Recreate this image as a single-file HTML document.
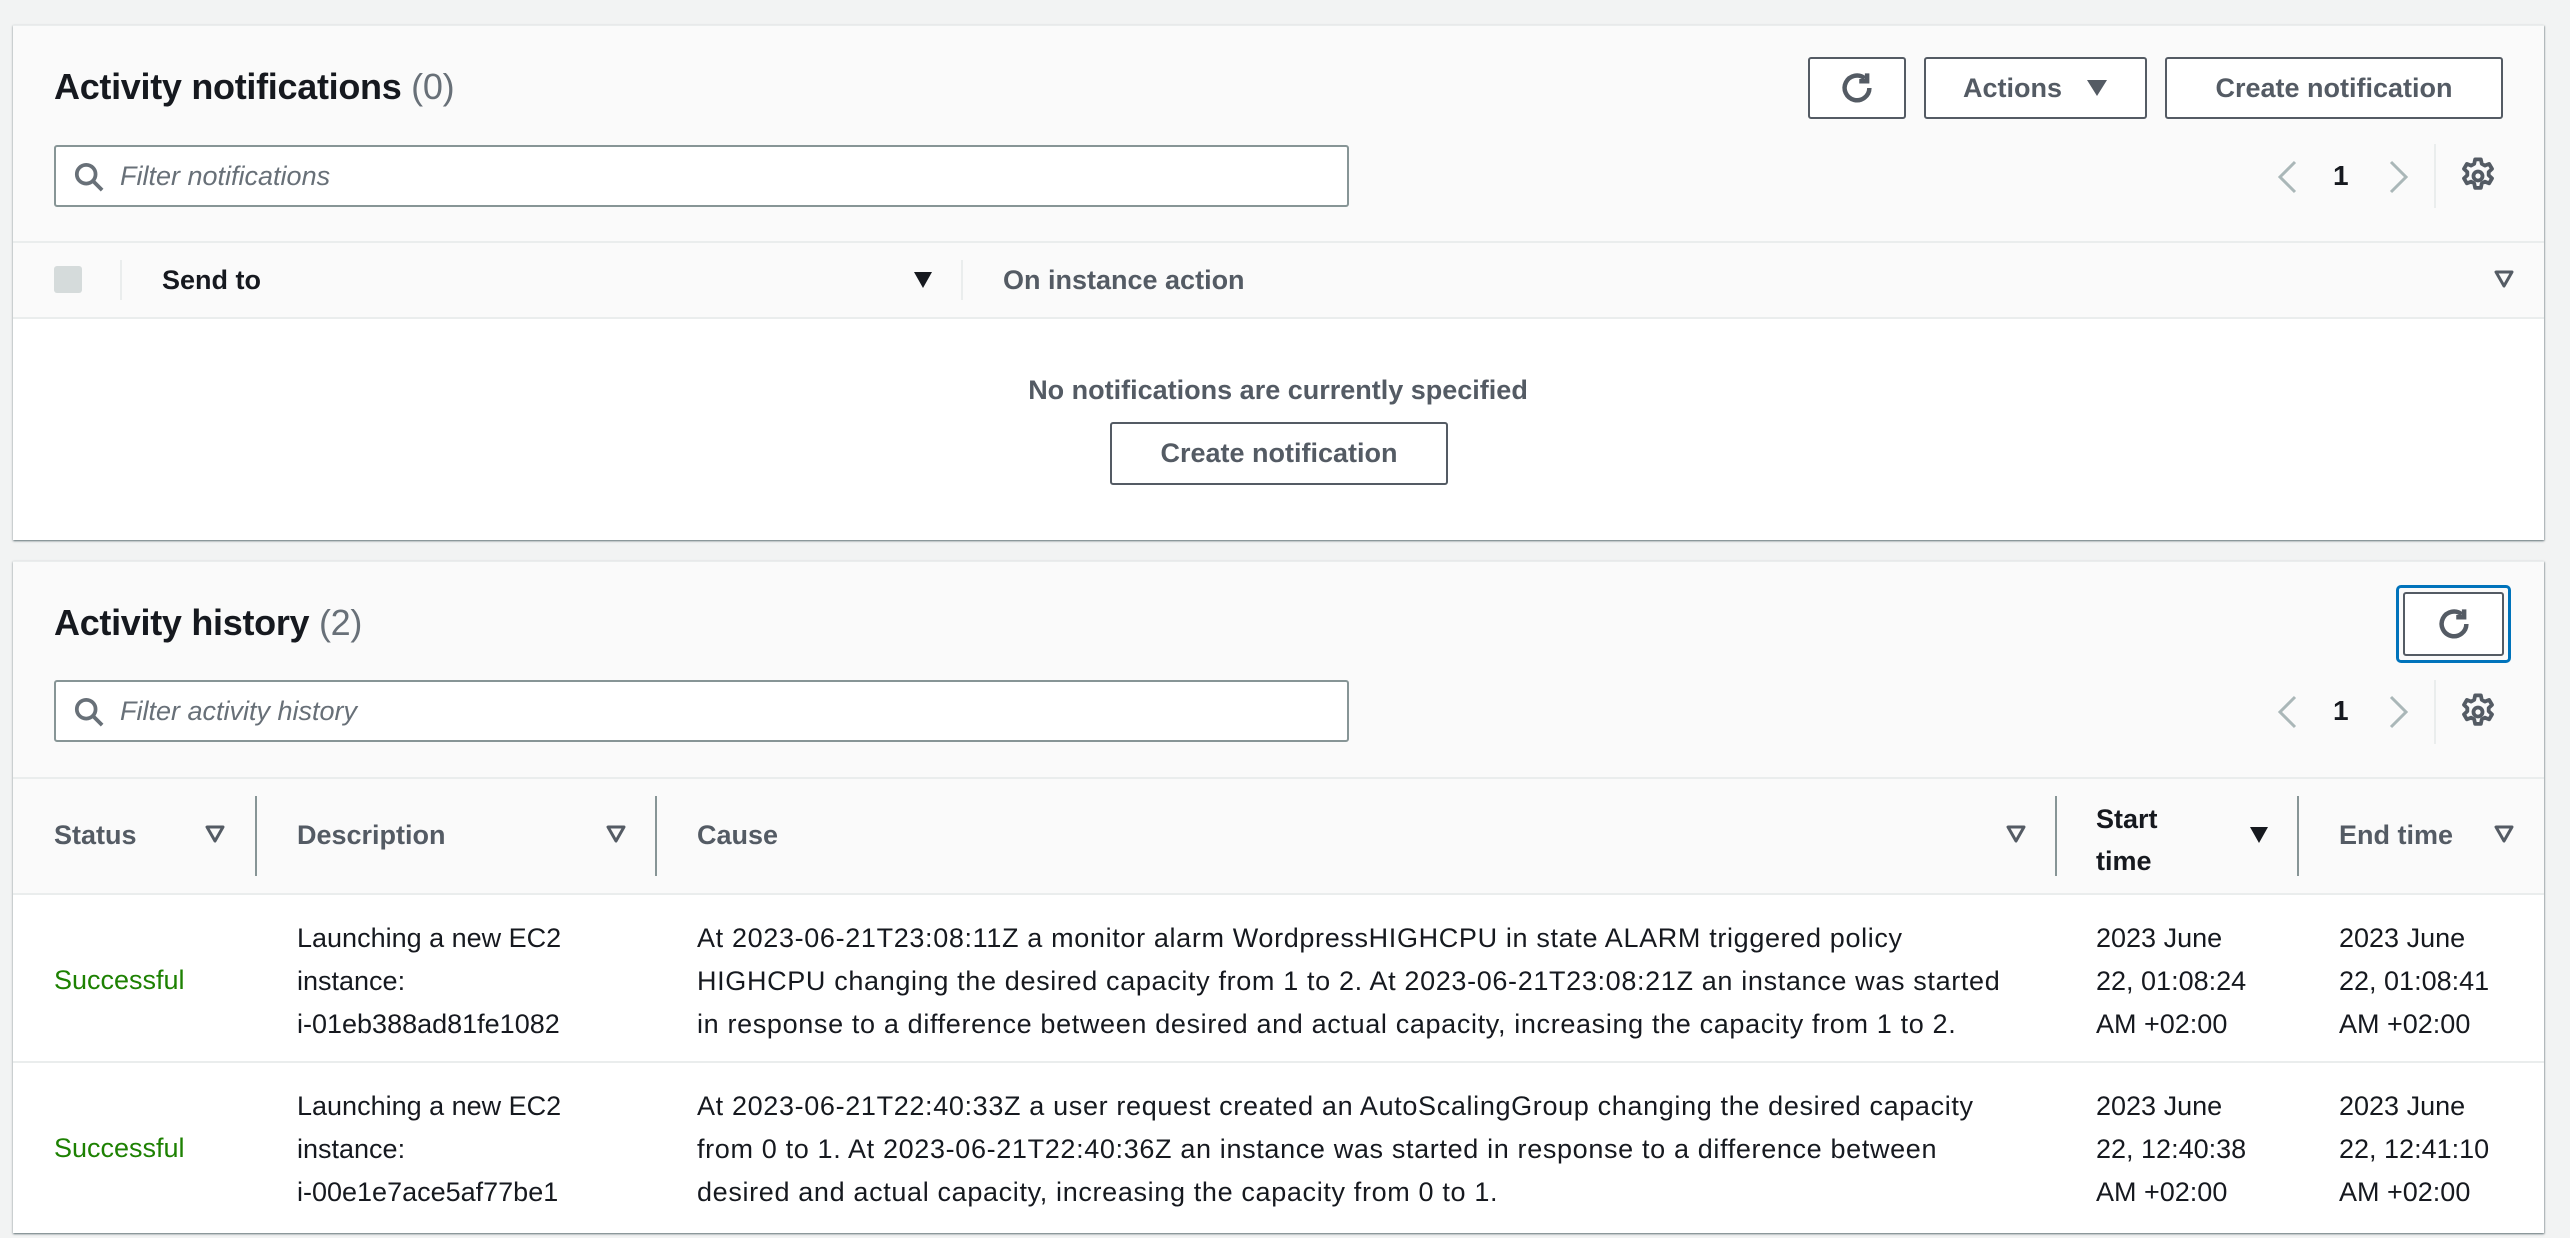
<!DOCTYPE html>
<html><head><meta charset="utf-8"><style>
*{box-sizing:border-box;margin:0;padding:0}
body{width:2570px;height:1238px;background:#f2f3f3;font-family:"Liberation Sans",sans-serif;color:#16191f;position:relative;overflow:hidden}
.a{position:absolute;white-space:nowrap}
.panel{position:absolute;left:13px;width:2531px;background:#fafafa;box-shadow:0 1px 2px rgba(0,28,36,.5),1px 1px 1px rgba(0,28,36,.15);border-top:1px solid #eaeded}
.title{font-size:36px;font-weight:bold;letter-spacing:-0.3px}
.title span{color:#687078;font-weight:normal}
.btn{position:absolute;border:2px solid #545b64;border-radius:3px;background:#fff;color:#545b64;font-weight:bold;font-size:27px;display:flex;align-items:center;justify-content:center}
.filter{position:absolute;left:54px;width:1295px;height:62px;background:#fff;border:2px solid #879596;border-radius:3px}
.filter .ph{position:absolute;left:64px;top:14px;font-style:italic;color:#687078;font-size:27px}
.th{font-size:27px;font-weight:bold;color:#545b64}
.td{font-size:27px;line-height:43px;color:#16191f}
.cause{letter-spacing:0.65px}
.sep{position:absolute;width:2px;background:#879596}
</style></head><body>

<!-- Panel 1 -->
<div class="panel" style="top:25px;height:515px"></div>
<div class="a title" style="left:54px;top:66px">Activity notifications <span>(0)</span></div>
<div class="btn" style="left:1808px;top:57px;width:98px;height:62px">
<svg width="36" height="36" viewBox="0 0 16 16" fill="none" stroke="#545b64" stroke-width="2"><path d="M13.5 8a5.5 5.5 0 1 1-2-4.3"/><path d="M12.5 1.5v3.5H9" stroke-width="2"/></svg></div>
<div class="btn" style="left:1924px;top:57px;width:223px;height:62px">Actions<svg style="margin-left:24px" width="22" height="18" viewBox="0 0 22 18"><path d="M1 1h20L11 17z" fill="#545b64"/></svg></div>
<div class="btn" style="left:2165px;top:57px;width:338px;height:62px">Create notification</div>

<div class="filter" style="top:145px"><svg class="a" style="left:18px;top:15px" width="30" height="30" viewBox="0 0 16 16" fill="none" stroke="#687078" stroke-width="2"><circle cx="6.5" cy="6.5" r="5"/><path d="M10 10l5 5"/></svg><div class="ph">Filter notifications</div></div>

<svg class="a" style="left:2276px;top:160px" width="22" height="34" viewBox="0 0 22 34" fill="none" stroke="#aab7b8" stroke-width="3"><path d="M19 2L4 17l15 15"/></svg>
<div class="a" style="left:2333px;top:160px;font-size:28px;font-weight:bold">1</div>
<svg class="a" style="left:2388px;top:160px" width="22" height="34" viewBox="0 0 22 34" fill="none" stroke="#aab7b8" stroke-width="3"><path d="M3 2l15 15L3 32"/></svg>
<div class="a" style="left:2434px;top:144px;width:2px;height:64px;background:#eaeded"></div>
<svg class="a" style="left:2459px;top:157px" width="38" height="38" viewBox="0 0 16 16" fill="none" stroke="#545b64" stroke-width="1.6"><path d="M6.8 1h2.4l.4 1.9 1.3.7 1.8-.7 1.2 2.1-1.4 1.3v1.4l1.4 1.3-1.2 2.1-1.8-.7-1.3.7-.4 1.9H6.8l-.4-1.9-1.3-.7-1.8.7-1.2-2.1 1.4-1.3V6.3L2.1 5l1.2-2.1 1.8.7 1.3-.7z" stroke-linejoin="round"/><circle cx="8" cy="8" r="1.9"/></svg>

<div class="a" style="left:13px;top:241px;width:2531px;height:78px;border-top:2px solid #eaeded;border-bottom:2px solid #eaeded;background:#fafafa"></div>
<div class="a" style="left:54px;top:266px;width:28px;height:27px;background:#d5dbdb;border-radius:3px"></div>
<div class="a" style="left:120px;top:260px;width:2px;height:40px;background:#eaeded"></div>
<div class="a th" style="left:162px;top:265px;color:#16191f">Send to</div>
<svg class="a" style="left:913px;top:271px" width="20" height="18" viewBox="0 0 20 18"><path d="M1 1h18L10 17z" fill="#16191f"/></svg>
<div class="a" style="left:961px;top:260px;width:2px;height:40px;background:#eaeded"></div>
<div class="a th" style="left:1003px;top:265px">On instance action</div>
<svg class="a" style="left:2494px;top:270px" width="20" height="18" viewBox="0 0 20 18"><path d="M2 2h16L10 16z" fill="none" stroke="#545b64" stroke-width="3" stroke-linejoin="round"/></svg>
<div class="a" style="left:13px;top:319px;width:2531px;height:221px;background:#fff"></div>
<div class="a th" style="left:0;width:2556px;text-align:center;top:375px">No notifications are currently specified</div>
<div class="btn" style="left:1110px;top:422px;width:338px;height:63px">Create notification</div>

<!-- Panel 2 -->
<div class="panel" style="top:561px;height:672px"></div>
<div class="a title" style="left:54px;top:602px">Activity history <span>(2)</span></div>
<div class="a" style="left:2396px;top:585px;width:115px;height:78px;border:3px solid #0073bb;border-radius:5px"></div>
<div class="btn" style="left:2403px;top:592px;width:101px;height:64px">
<svg width="36" height="36" viewBox="0 0 16 16" fill="none" stroke="#545b64" stroke-width="2"><path d="M13.5 8a5.5 5.5 0 1 1-2-4.3"/><path d="M12.5 1.5v3.5H9"/></svg></div>
<div class="filter" style="top:680px"><svg class="a" style="left:18px;top:15px" width="30" height="30" viewBox="0 0 16 16" fill="none" stroke="#687078" stroke-width="2"><circle cx="6.5" cy="6.5" r="5"/><path d="M10 10l5 5"/></svg><div class="ph">Filter activity history</div></div>

<svg class="a" style="left:2276px;top:695px" width="22" height="34" viewBox="0 0 22 34" fill="none" stroke="#aab7b8" stroke-width="3"><path d="M19 2L4 17l15 15"/></svg>
<div class="a" style="left:2333px;top:695px;font-size:28px;font-weight:bold">1</div>
<svg class="a" style="left:2388px;top:695px" width="22" height="34" viewBox="0 0 22 34" fill="none" stroke="#aab7b8" stroke-width="3"><path d="M3 2l15 15L3 32"/></svg>
<div class="a" style="left:2434px;top:680px;width:2px;height:64px;background:#eaeded"></div>
<svg class="a" style="left:2459px;top:693px" width="38" height="38" viewBox="0 0 16 16" fill="none" stroke="#545b64" stroke-width="1.6"><path d="M6.8 1h2.4l.4 1.9 1.3.7 1.8-.7 1.2 2.1-1.4 1.3v1.4l1.4 1.3-1.2 2.1-1.8-.7-1.3.7-.4 1.9H6.8l-.4-1.9-1.3-.7-1.8.7-1.2-2.1 1.4-1.3V6.3L2.1 5l1.2-2.1 1.8.7 1.3-.7z" stroke-linejoin="round"/><circle cx="8" cy="8" r="1.9"/></svg>

<div class="a" style="left:13px;top:777px;width:2531px;height:118px;border-top:2px solid #eaeded;border-bottom:2px solid #eaeded;background:#fafafa"></div>
<div class="a th" style="left:54px;top:820px">Status</div>
<svg class="a" style="left:205px;top:825px" width="20" height="18" viewBox="0 0 20 18"><path d="M2 2h16L10 16z" fill="none" stroke="#545b64" stroke-width="3" stroke-linejoin="round"/></svg>
<div class="sep" style="left:255px;top:796px;height:80px"></div>
<div class="a th" style="left:297px;top:820px">Description</div>
<svg class="a" style="left:606px;top:825px" width="20" height="18" viewBox="0 0 20 18"><path d="M2 2h16L10 16z" fill="none" stroke="#545b64" stroke-width="3" stroke-linejoin="round"/></svg>
<div class="sep" style="left:655px;top:796px;height:80px"></div>
<div class="a th" style="left:697px;top:820px">Cause</div>
<svg class="a" style="left:2006px;top:825px" width="20" height="18" viewBox="0 0 20 18"><path d="M2 2h16L10 16z" fill="none" stroke="#545b64" stroke-width="3" stroke-linejoin="round"/></svg>
<div class="sep" style="left:2055px;top:796px;height:80px"></div>
<div class="a th" style="left:2096px;top:798px;line-height:42px;color:#16191f">Start<br>time</div>
<svg class="a" style="left:2249px;top:826px" width="20" height="18" viewBox="0 0 20 18"><path d="M1 1h18L10 17z" fill="#16191f"/></svg>
<div class="sep" style="left:2297px;top:796px;height:80px"></div>
<div class="a th" style="left:2339px;top:820px">End time</div>
<svg class="a" style="left:2494px;top:825px" width="20" height="18" viewBox="0 0 20 18"><path d="M2 2h16L10 16z" fill="none" stroke="#545b64" stroke-width="3" stroke-linejoin="round"/></svg>

<div class="a" style="left:13px;top:895px;width:2531px;height:338px;background:#fff"></div>
<div class="a" style="left:13px;top:1061px;width:2531px;height:2px;background:#eaeded"></div>

<div class="a td" style="left:54px;top:959px;color:#1d8102">Successful</div>
<div class="a td" style="left:297px;top:917px">Launching a new EC2<br>instance:<br>i-01eb388ad81fe1082</div>
<div class="a td cause" style="left:697px;top:917px">At 2023-06-21T23:08:11Z a monitor alarm WordpressHIGHCPU in state ALARM triggered policy<br>HIGHCPU changing the desired capacity from 1 to 2. At 2023-06-21T23:08:21Z an instance was started<br>in response to a difference between desired and actual capacity, increasing the capacity from 1 to 2.</div>
<div class="a td" style="left:2096px;top:917px">2023 June<br>22, 01:08:24<br>AM +02:00</div>
<div class="a td" style="left:2339px;top:917px">2023 June<br>22, 01:08:41<br>AM +02:00</div>

<div class="a td" style="left:54px;top:1127px;color:#1d8102">Successful</div>
<div class="a td" style="left:297px;top:1085px">Launching a new EC2<br>instance:<br>i-00e1e7ace5af77be1</div>
<div class="a td cause" style="left:697px;top:1085px">At 2023-06-21T22:40:33Z a user request created an AutoScalingGroup changing the desired capacity<br>from 0 to 1. At 2023-06-21T22:40:36Z an instance was started in response to a difference between<br>desired and actual capacity, increasing the capacity from 0 to 1.</div>
<div class="a td" style="left:2096px;top:1085px">2023 June<br>22, 12:40:38<br>AM +02:00</div>
<div class="a td" style="left:2339px;top:1085px">2023 June<br>22, 12:41:10<br>AM +02:00</div>

</body></html>
